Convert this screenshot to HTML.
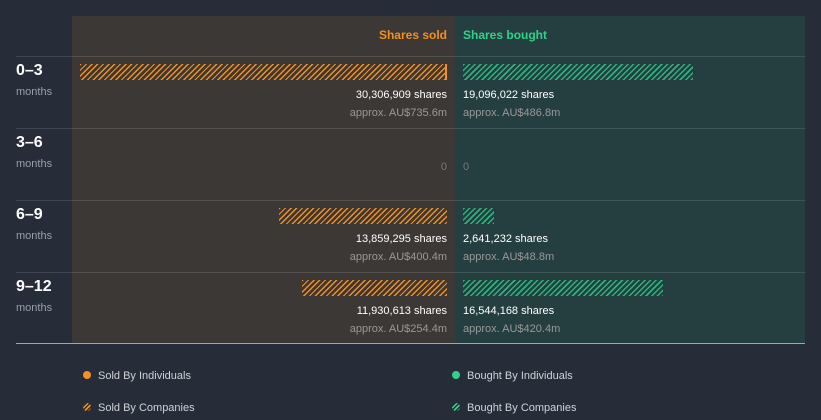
<!DOCTYPE html>
<html><head><style>
*{margin:0;padding:0;box-sizing:border-box}
body{width:821px;height:420px;background:#262d39;font-family:"Liberation Sans",sans-serif;position:relative;overflow:hidden}
.a{position:absolute}
.sold{left:72px;top:16px;width:383px;height:327px;background:#3c3835}
.buy{left:455px;top:16px;width:350px;height:327px;background:#253f40}
.hl{height:1px;background:rgba(255,255,255,0.12);left:16px;width:789px}
.os{background:repeating-linear-gradient(135deg,#f5901b 0 1.3px,transparent 1.3px 4px);height:16px}
.gs{background:repeating-linear-gradient(135deg,#2bb37d 0 1.5px,transparent 1.5px 4px);height:16px}
.t1{font-size:11px;color:#fff}
.t2{font-size:11px;color:#999}
.r{text-align:right;width:200px}
.lab{font-size:16px;font-weight:bold;color:#fff;left:16px}
.mo{font-size:11px;color:#9a9fa8;left:16px}
.lg{font-size:11px;color:#d0d3d8}
</style></head><body>
<div class="a sold"></div><div class="a buy"></div>
<div class="a" style="left:247px;top:28px;width:200px;text-align:right;font-size:12px;font-weight:bold;color:#f5901b">Shares sold</div>
<div class="a" style="left:463px;top:28px;font-size:12px;font-weight:bold;color:#2ed388">Shares bought</div>
<div class="a hl" style="top:56px"></div>
<div class="a hl" style="top:128px"></div>
<div class="a hl" style="top:200px"></div>
<div class="a hl" style="top:272px"></div>
<div class="a" style="left:16px;top:343px;width:789px;height:1px;background:#9aa"></div>

<div class="a lab" style="top:62px">0–3</div><div class="a mo" style="top:86px">months</div>
<div class="a lab" style="top:134px">3–6</div><div class="a mo" style="top:158px">months</div>
<div class="a lab" style="top:206px">6–9</div><div class="a mo" style="top:230px">months</div>
<div class="a lab" style="top:278px">9–12</div><div class="a mo" style="top:302px">months</div>

<div class="a os" style="left:80px;top:64px;width:367px"></div>
<div class="a" style="left:445px;top:64px;width:2px;height:16px;background:#f5901b"></div>
<div class="a gs" style="left:463px;top:64px;width:230px"></div>
<div class="a t1 r" style="left:247px;top:89px">30,306,909 shares</div>
<div class="a t2 r" style="left:247px;top:107px">approx. AU$735.6m</div>
<div class="a t1" style="left:463px;top:89px">19,096,022 shares</div>
<div class="a t2" style="left:463px;top:107px">approx. AU$486.8m</div>

<div class="a t2 r" style="left:247px;top:161px;color:#777">0</div>
<div class="a t2" style="left:463px;top:161px;color:#777">0</div>

<div class="a os" style="left:279px;top:208px;width:168px"></div>
<div class="a gs" style="left:463px;top:208px;width:31px"></div>
<div class="a t1 r" style="left:247px;top:233px">13,859,295 shares</div>
<div class="a t2 r" style="left:247px;top:251px">approx. AU$400.4m</div>
<div class="a t1" style="left:463px;top:233px">2,641,232 shares</div>
<div class="a t2" style="left:463px;top:251px">approx. AU$48.8m</div>

<div class="a os" style="left:302px;top:280px;width:145px"></div>
<div class="a gs" style="left:463px;top:280px;width:200px"></div>
<div class="a t1 r" style="left:247px;top:305px">11,930,613 shares</div>
<div class="a t2 r" style="left:247px;top:323px">approx. AU$254.4m</div>
<div class="a t1" style="left:463px;top:305px">16,544,168 shares</div>
<div class="a t2" style="left:463px;top:323px">approx. AU$420.4m</div>

<div class="a" style="left:83px;top:371px;width:8px;height:8px;border-radius:50%;background:#f5901b"></div>
<div class="a lg" style="left:98px;top:370px">Sold By Individuals</div>
<div class="a" style="left:452px;top:371px;width:8px;height:8px;border-radius:50%;background:#2ed388"></div>
<div class="a lg" style="left:467px;top:370px">Bought By Individuals</div>
<div class="a" style="left:83px;top:403px;width:8px;height:8px;border-radius:50%;background:repeating-linear-gradient(135deg,#f5901b 0 1.5px,transparent 1.5px 3px)"></div>
<div class="a lg" style="left:98px;top:402px">Sold By Companies</div>
<div class="a" style="left:452px;top:403px;width:8px;height:8px;border-radius:50%;background:repeating-linear-gradient(135deg,#2ed388 0 1.5px,transparent 1.5px 3px)"></div>
<div class="a lg" style="left:467px;top:402px">Bought By Companies</div>
</body></html>
